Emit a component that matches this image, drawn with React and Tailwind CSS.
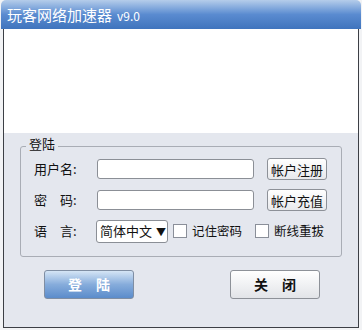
import React from 'react';

const font = { fontFamily: '"Noto Sans CJK SC", "Liberation Sans", sans-serif' };

const Checkbox = () => (
  <span className="inline-block w-[14px] h-[14px] border border-[#8a8f99] bg-white" />
);

const SideButton = ({ children }) => (
  <button className="h-[22px] w-[60px] rounded-[3px] border border-[#8d9198] bg-gradient-to-b from-white to-[#e8e9ec] text-[13px] leading-none text-[#111]">
    {children}
  </button>
);

const Input = () => (
  <div className="h-[20px] w-[157px] rounded-[3px] border border-[#8b8f96] bg-white" />
);

export default function App() {
  return (
    <div className="w-[362px] h-[330px] bg-[#f2f3f5] flex flex-col overflow-hidden" style={font}>
      <div className="h-[29px] mx-[1px] rounded-t-[5px] bg-gradient-to-b from-[#b5cdea] via-[#5a8bd0] to-[#3f74bd] flex items-center pl-[6px] pt-[2px] text-white">
        <span className="text-[15px]">玩客网络加速器</span>
        <span className="text-[12px] ml-[5px] mt-[1px]">v9.0</span>
      </div>
      <div className="flex-1 mx-[3px] mb-[2px] border-l border-r border-b border-[#3c3f45] flex flex-col">
        <div className="h-[104px] bg-white" />
        <div className="flex-1 bg-[#e4e7ee] px-[16px] pt-[13px]">
          <div className="relative border border-[#a9adb5] rounded-[3px] h-[111px] pl-[13px] pt-[11px]">
            <span className="absolute -top-[10px] left-[5px] px-[3px] bg-[#e4e7ee] text-[13px] leading-[14px] text-[#111]">登陆</span>
            <div className="flex items-center h-[22px] text-[13px] text-[#111]">
              <span className="w-[63px]">用户名:</span>
              <Input />
              <span className="ml-[13px]"><SideButton>帐户注册</SideButton></span>
            </div>
            <div className="flex items-center h-[22px] mt-[9px] text-[13px] text-[#111]">
              <span className="w-[63px]">密　码:</span>
              <Input />
              <span className="ml-[13px]"><SideButton>帐户充值</SideButton></span>
            </div>
            <div className="flex items-center h-[24px] mt-[8px] text-[13px] text-[#111]">
              <span className="w-[62px]">语　言:</span>
              <div className="h-[23px] w-[72px] rounded-[3px] border border-[#8b8f96] bg-white flex items-center pl-[3px]">
                <span>简体中文</span>
                <span className="ml-[4px] text-[10px]">▼</span>
              </div>
              <span className="ml-[5px] flex items-center gap-[5px]"><Checkbox /><span className="text-[12.5px]">记住密码</span></span>
              <span className="ml-[13px] flex items-center gap-[5px]"><Checkbox /><span className="text-[12.5px]">断线重拔</span></span>
            </div>
          </div>
          <div className="flex justify-between pl-[24px] pr-[22px] mt-[13px]">
            <button className="h-[29px] w-[90px] rounded-[3px] border border-[#7f8ea3] bg-gradient-to-b from-[#d5e5f5] via-[#86acdb] to-[#5b8ccb] text-white text-[14px] font-bold tracking-[14px] pl-[14px]">
              登陆
            </button>
            <button className="h-[29px] w-[90px] rounded-[3px] border border-[#8d9198] bg-gradient-to-b from-white to-[#e2e4e8] text-[#111] text-[14px] font-bold tracking-[14px] pl-[14px]">
              关闭
            </button>
          </div>
        </div>
      </div>
    </div>
  );
}
